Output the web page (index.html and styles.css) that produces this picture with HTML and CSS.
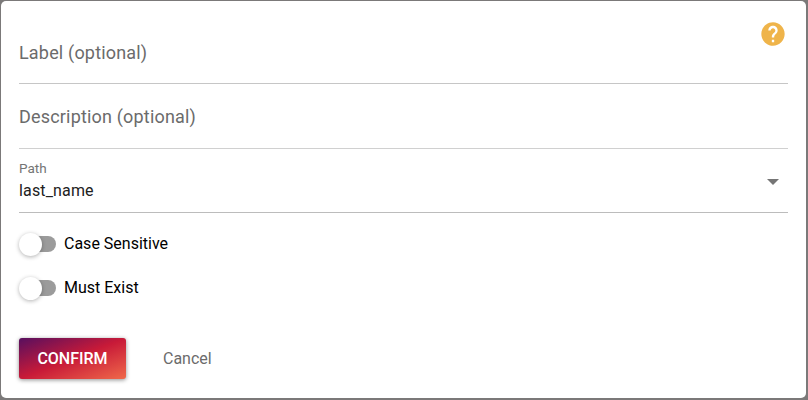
FILE: index.html
```html
<!DOCTYPE html>
<html lang="en">
<head>
    <meta charset="UTF-8">
    <meta name="viewport" content="width=device-width, initial-scale=1.0">
    <title>Edit Rule</title>
    <link rel="stylesheet" href="styles.css">
</head>
<body>
    <form class="dialog">
        <div class="field">
            <span class="placeholder">Label (optional)</span>
            <svg class="help" viewBox="0 0 24 24">
                <path fill="#efb44a" d="M12 2C6.480 2 2 6.480 2 12s4.480 10 10 10 10-4.480 10-10S17.520 2 12 2zm1 17h-2v-2h2v2zm2.070-7.750l-.9.920C13.450 12.900 13 13.500 13 15h-2v-.5c0-1.100.450-2.100 1.170-2.830l1.240-1.260c.370-.360.590-.860.590-1.410 0-1.100-.9-2-2-2s-2 .9-2 2H8c0-2.210 1.790-4 4-4s4 1.790 4 4c0 .880-.360 1.680-.930 2.250z"/>
            </svg>
        </div>
        <div class="field description">
            <span class="placeholder">Description (optional)</span>
        </div>
        <div class="field select">
            <div>
                <div class="select-label">Path</div>
                <div class="select-value">last_name</div>
            </div>
            <svg class="arrow" viewBox="0 0 12 6">
                <path fill="#757575" d="M0 0h12L6 6z"/>
            </svg>
        </div>
        <div class="toggle">
            <span class="track"><span class="thumb"></span></span>
            <span class="toggle-text">Case Sensitive</span>
        </div>
        <div class="toggle">
            <span class="track"><span class="thumb"></span></span>
            <span class="toggle-text">Must Exist</span>
        </div>
        <div class="actions">
            <button type="submit" class="confirm-btn">CONFIRM</button>
            <button type="button" class="cancel-btn">Cancel</button>
        </div>
    </form>
</body>
</html>
```

FILE: styles.css
```css
* {
    box-sizing: border-box;
}

body {
    margin: 0;
    height: 100vh;
    padding: 1px 2px 2px 1px;
    background-color: #7b7979;
    font-family: Roboto, sans-serif;
    font-size: 16px;
    overflow: hidden;
}

.dialog {
    height: 397px;
    padding: 18px;
    background-color: #fff;
    border-radius: 5px;
}

.field {
    display: flex;
    justify-content: space-between;
    height: 65px;
    border-bottom: 1px solid #c6c6c6;
}

.description {
    border-bottom-color: #d0d0d0;
}

.select {
    height: 64px;
    border-bottom-color: #bcbcbc;
}

.placeholder {
    padding-top: 22px;
    line-height: 24px;
    font-size: 18px;
    letter-spacing: 0.18px;
    color: #6b6b6b;
}

.description .placeholder {
    padding-top: 21px;
}

.help {
    width: 28px;
    height: 28px;
    margin: 1px 1px 0 0;
}

.select-label {
    padding-top: 11px;
    line-height: 16px;
    font-size: 13.5px;
    color: #757575;
}

.select-value {
    padding-top: 4px;
    line-height: 22px;
    letter-spacing: 0.15px;
    color: #212121;
}

.arrow {
    width: 12px;
    height: 6px;
    margin: 29.5px 9px 0 0;
}

.toggle {
    display: flex;
    align-items: center;
    gap: 8px;
    height: 24px;
    margin-top: 19px;
    color: #000;
}

.toggle + .toggle {
    margin-top: 20px;
}

.toggle-text {
    padding-bottom: 1px;
}

.track {
    display: flex;
    align-items: center;
    width: 36px;
    height: 16px;
    margin-left: 1px;
    border-radius: 8px;
    background-color: #9b9b9b;
}

.thumb {
    flex: none;
    width: 23px;
    height: 23px;
    margin-left: -1px;
    border-radius: 50%;
    background-color: #fff;
    box-shadow: 0 1px 4px rgba(0, 0, 0, 0.3);
}

.actions {
    display: flex;
    gap: 37px;
    margin-top: 38px;
}

.confirm-btn {
    width: 107px;
    height: 41px;
    padding: 0;
    border: none;
    border-radius: 3px;
    background-image: linear-gradient(to bottom right, #570f5f, #c81a38 50%, #f0694a);
    box-shadow: 0 1px 4px rgba(0, 0, 0, 0.45);
    font: 500 16px Roboto, sans-serif;
    color: #fff;
    cursor: pointer;
}

.cancel-btn {
    padding: 0;
    border: none;
    background: none;
    font: 16px Roboto, sans-serif;
    color: #6b6b6b;
    cursor: pointer;
}
```
